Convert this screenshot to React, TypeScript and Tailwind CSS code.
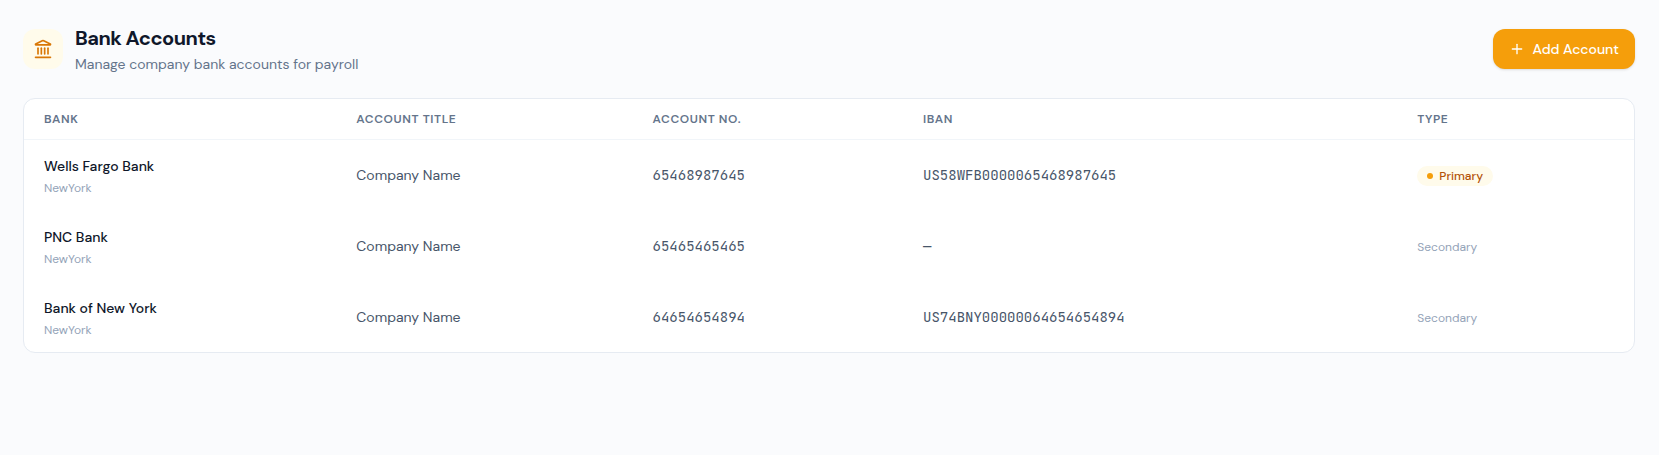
import React from 'react';
import { Landmark, Plus } from 'lucide-react';

interface BankAccount {
  id: string;
  bank: string;
  branch: string;
  title: string;
  accountNo: string;
  iban?: string;
  isPrimary: boolean;
}

const accounts: BankAccount[] = [
  {
    id: '1',
    bank: 'Wells Fargo Bank',
    branch: 'NewYork',
    title: 'Company Name',
    accountNo: '65468987645',
    iban: 'US58WFB0000065468987645',
    isPrimary: true,
  },
  {
    id: '2',
    bank: 'PNC Bank',
    branch: 'NewYork',
    title: 'Company Name',
    accountNo: '65465465465',
    isPrimary: false,
  },
  {
    id: '3',
    bank: 'Bank of New York',
    branch: 'NewYork',
    title: 'Company Name',
    accountNo: '64654654894',
    iban: 'US74BNY00000064654654894',
    isPrimary: false,
  },
];

const columns = [
  { label: 'Bank', width: 'w-[19.4%]' },
  { label: 'Account Title', width: 'w-[18.4%]' },
  { label: 'Account No.', width: 'w-[16.8%]' },
  { label: 'IBAN', width: 'w-[30.7%]' },
  { label: 'Type', width: 'w-[14.7%]' },
];

const TypeCell: React.FC<{ isPrimary: boolean }> = ({ isPrimary }) => {
  if (!isPrimary) {
    return <span className="text-xs text-[#94a3b8]">Secondary</span>;
  }
  return (
    <span className="inline-flex items-center gap-1.5 rounded-full bg-[#fffbeb] px-2.5 py-0.5 text-xs font-medium text-[#b45309]">
      <span className="h-1.5 w-1.5 rounded-full bg-[#f59e0b]" />
      Primary
    </span>
  );
};

const App: React.FC = () => {
  return (
    <main className="min-h-screen bg-[#fafbfd] py-6 pr-6 pl-[23px] font-['DM_Sans',Inter,sans-serif]">
      {/* Page header */}
      <header className="mb-6 flex items-center justify-between">
        <div className="flex items-center gap-3">
          <div className="flex h-10 w-10 items-center justify-center rounded-xl bg-[#fffbeb]">
            <Landmark size={20} className="text-[#d97706]" />
          </div>
          <div>
            <h1 className="text-xl font-bold tracking-tight text-[#0f172a]">Bank Accounts</h1>
            <p className="mt-0.5 text-sm text-[#64748b]">Manage company bank accounts for payroll</p>
          </div>
        </div>
        <button
          type="button"
          className="flex h-10 items-center gap-2 rounded-xl bg-[#f59e0b] px-4 text-sm font-medium text-white shadow-sm hover:bg-[#d97706]"
        >
          <Plus size={16} />
          Add Account
        </button>
      </header>

      {/* Accounts table */}
      <section className="overflow-hidden rounded-xl border border-[#e6ebf2] bg-white">
        <table className="w-full table-fixed text-left text-sm">
          <thead>
            <tr className="h-10 border-b border-[#f1f5f9]">
              {columns.map((col) => (
                <th
                  key={col.label}
                  scope="col"
                  className={`${col.width} px-5 text-xs font-semibold tracking-wider text-[#64748b] uppercase`}
                >
                  {col.label}
                </th>
              ))}
            </tr>
          </thead>
          <tbody>
            {accounts.map((account) => (
              <tr key={account.id} className="h-[71px]">
                <td className="px-5 pt-4 pb-3.5">
                  <p className="font-medium text-[#0f172a]">{account.bank}</p>
                  <p className="mt-1 text-xs text-[#94a3b8]">{account.branch}</p>
                </td>
                <td className="px-5 text-[#475569]">{account.title}</td>
                <td className="px-5 font-['JetBrains_Mono','DejaVu_Sans_Mono',monospace] text-[#475569]">
                  {account.accountNo}
                </td>
                <td className="px-5 font-['JetBrains_Mono','DejaVu_Sans_Mono',monospace] text-[#475569]">
                  {account.iban ?? '—'}
                </td>
                <td className="px-5">
                  <TypeCell isPrimary={account.isPrimary} />
                </td>
              </tr>
            ))}
          </tbody>
        </table>
      </section>
    </main>
  );
};

export default App;
